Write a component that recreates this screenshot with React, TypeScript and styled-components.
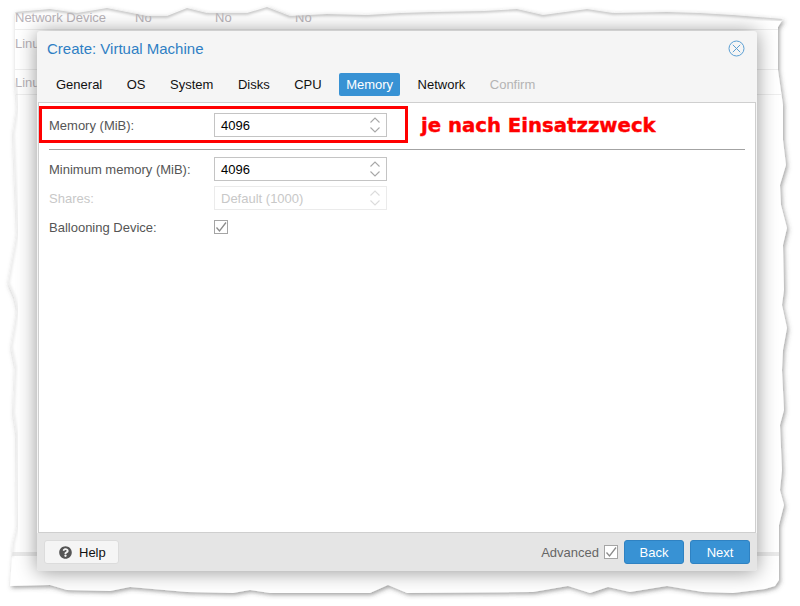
import React from 'react';
import styled, {createGlobalStyle} from 'styled-components';
import {FaQuestionCircle} from 'react-icons/fa';

const topEdge = '15,12 50,9 77,13 107,8 147,16 167,16 187,8 207,13 247,13 267,7 290,16 327,14 367,15 400,13 433,12 483,11 517,9 543,15 587,9 613,13 667,12 700,13 733,15 783,19';
const rightEdge = '778,27 778,70 783,105 783,140 786,165 780,185 781,205 787,228 783,245 784,290 782,305 787,328 783,350 782,370 784,410 780,425 782,470 780,490 784,505 779,525 779,580';
const bottomEdge = '775,586 765,589 733,593 703,592 667,586 630,592 608,587 590,593 568,586 533,592 407,593 388,585 370,593 270,593 250,590 233,593 187,592 130,587 110,591 67,590 50,585 10,586';
const leftEdge = '12,557 13,543 17,527 16,433 13,413 15,367 11,347 17,310 14,297 8,283 17,233 15,187 13,133 17,107 15,83';

const outline = `${topEdge} ${rightEdge} ${bottomEdge} ${leftEdge}`;
const outlineCss = outline
    .split(' ')
    .map((point) => point.split(',').map((n) => `${n}px`).join(' '))
    .join(', ');

const GlobalStyle = createGlobalStyle`
    html, body {
        margin: 0;
        padding: 0;
        background: #fff;
    }
    body {
        font-family: "Liberation Sans", Arial, sans-serif;
        font-size: 13px;
    }
`;

const Stage = styled.div`
    position: relative;
    width: 800px;
    height: 606px;
    overflow: hidden;
`;

const PaperArt = styled.svg`
    position: absolute;
    inset: 0;
`;

// Page behind the dialog, cut off along the torn edge
const Paper = styled.div`
    position: absolute;
    inset: 0;
    display: flex;
    flex-direction: column;
    clip-path: polygon(${outlineCss});
    color: #b8b2b8;
`;

const Row = styled.div<{$height: number}>`
    display: flex;
    box-sizing: border-box;
    height: ${(p) => p.$height}px;
    padding: 0 0 0 15px;
    border-bottom: 1px solid #eee;
`;

const FirstRow = styled(Row)`
    align-items: flex-end;
    padding-bottom: 4px;
`;

const LinuxRow = styled(Row)`
    padding-top: 6px;
`;

const LastRow = styled(Row)`
    padding-top: 5px;
`;

const Cell = styled.span<{$width: number}>`
    width: ${(p) => p.$width}px;
`;

const Band = styled.div`
    height: 4px;
    margin-top: 457px;
    background: #eaeaea;
`;

const Dialog = styled.div`
    position: absolute;
    left: 37px;
    top: 31px;
    width: 720px;
    height: 540px;
    display: flex;
    flex-direction: column;
    box-sizing: border-box;
    background: #f5f5f5;
    border-radius: 3px;
    box-shadow: 0 1px 20px rgba(0, 0, 0, 0.42);
    overflow: hidden;
`;

const Header = styled.div`
    display: flex;
    align-items: center;
    justify-content: space-between;
    height: 35px;
    padding: 0 12px 0 10px;
`;

const Title = styled.div`
    font-size: 15px;
    color: #2f7fc4;
`;

const Tabs = styled.div`
    display: flex;
    height: 36px;
    padding: 7px 0 0 12px;
    box-sizing: border-box;
`;

const Tab = styled.div<{$active?: boolean; $disabled?: boolean}>`
    height: 23px;
    line-height: 24px;
    padding: 0 7px;
    margin-right: 10.5px;
    border-radius: 2px;
    color: ${(p) => (p.$active ? '#fff' : p.$disabled ? '#b4b4b4' : '#111')};
    background: ${(p) => (p.$active ? '#3892d4' : 'transparent')};
`;

const Body = styled.div`
    flex: 1;
    position: relative;
    margin: 0 1px;
    padding: 4px 10px 0 10px;
    background: #fff;
    border: 1px solid #cfcfcf;
    display: flex;
    flex-direction: column;
`;

const Field = styled.div<{$disabled?: boolean}>`
    display: flex;
    align-items: center;
    height: 24px;
    margin-bottom: 5px;
    color: ${(p) => (p.$disabled ? '#c8c8c8' : '#555')};
`;

const TopField = styled(Field)`
    margin-top: 6px;
    margin-bottom: 12px;
`;

const FieldLabel = styled.label`
    width: 165px;
`;

const SpinBox = styled.div<{$disabled?: boolean}>`
    display: flex;
    align-items: center;
    justify-content: space-between;
    box-sizing: border-box;
    width: 173px;
    height: 24px;
    padding: 0 4px 0 6px;
    border: 1px solid ${(p) => (p.$disabled ? '#ebebeb' : '#c4c4c4')};
    color: ${(p) => (p.$disabled ? '#c8c8c8' : '#000')};
    background: #fff;
`;

const Divider = styled.div`
    height: 1px;
    margin-bottom: 7px;
    background: #a3a3a3;
`;

const CheckWrap = styled.span`
    display: inline-flex;
    width: 14px;
    height: 14px;
`;

const Note = styled.div`
    position: absolute;
    left: 382px;
    top: 11px;
    font-family: "DejaVu Sans", Verdana, sans-serif;
    font-size: 19.7px;
    font-weight: 700;
    color: #ff0000;
    -webkit-text-stroke: 0.4px #ff0000;
    white-space: nowrap;
`;

const Highlight = styled.div`
    position: absolute;
    left: 0;
    top: 3px;
    width: 369px;
    height: 37px;
    box-sizing: border-box;
    border: 3px solid #ff0000;
`;

const Footer = styled.div`
    display: flex;
    align-items: center;
    height: 38px;
    padding: 0 7px;
    background: #e5e5e5;
`;

const HelpButton = styled.button`
    display: flex;
    align-items: center;
    gap: 7px;
    box-sizing: border-box;
    width: 75px;
    height: 24px;
    padding: 0 0 0 14px;
    font: inherit;
    color: #111;
    background: #f5f5f5;
    border: 1px solid #dcdcdc;
    border-radius: 3px;
`;

const Advanced = styled.div`
    display: flex;
    align-items: center;
    gap: 5px;
    margin-left: auto;
    color: #666;
`;

const PrimaryButton = styled.button`
    box-sizing: border-box;
    width: 60px;
    height: 24px;
    margin-left: 6px;
    padding: 0;
    font: inherit;
    color: #fff;
    background: #3892d4;
    border: 1px solid #2f82c2;
    border-radius: 3px;
`;

const Spinner = ({color}: {color: string}) => (
    <svg width="14" height="20" viewBox="0 0 14 20" fill="none" stroke={color} strokeWidth="1.1">
        <path d="M2.5 7.5 7 3l4.5 4.5"/>
        <path d="M2.5 12.5 7 17l4.5-4.5"/>
    </svg>
);

const Check = () => (
    <CheckWrap>
        <svg width="14" height="14" viewBox="0 0 14 14" fill="none">
            <rect x="0.5" y="0.5" width="13" height="13" fill="#fff" stroke="#a5a5a5"/>
            <path d="M2.5 7.5 5.5 11 12 2.5" stroke="#8c8c8c" strokeWidth="1.3"/>
        </svg>
    </CheckWrap>
);

const CloseIcon = () => (
    <svg width="17" height="17" viewBox="0 0 17 17" fill="none" stroke="#5b9fd3" strokeWidth="1">
        <circle cx="8.5" cy="8.5" r="7.5"/>
        <path d="M4.8 4.8l7.4 7.4M12.2 4.8l-7.4 7.4"/>
    </svg>
);

export default function App() {
    const tabs = ['General', 'OS', 'System', 'Disks', 'CPU', 'Memory', 'Network', 'Confirm'];

    return (
        <Stage>
            <GlobalStyle/>
            <PaperArt width="800" height="606" viewBox="0 0 800 606">
                <defs>
                    <filter id="tornShadow" x="-5%" y="-5%" width="110%" height="110%">
                        <feDropShadow dx="1.5" dy="2" stdDeviation="2" floodColor="#444" floodOpacity="0.5"/>
                    </filter>
                </defs>
                <polygon points={outline} fill="#fff" filter="url(#tornShadow)"/>
            </PaperArt>
            <Paper>
                <FirstRow $height={30}>
                    <Cell $width={120}>Network Device</Cell>
                    <Cell $width={80}>No</Cell>
                    <Cell $width={80}>No</Cell>
                    <Cell $width={80}>No</Cell>
                </FirstRow>
                <LinuxRow $height={40}>Linux</LinuxRow>
                <LastRow $height={25}>Linux</LastRow>
                <Band/>
            </Paper>
            <PaperArt width="800" height="606" viewBox="0 0 800 606">
                <defs>
                    <clipPath id="paperClip">
                        <polygon points={outline}/>
                    </clipPath>
                    <filter id="edgeBlur">
                        <feGaussianBlur stdDeviation="1.8"/>
                    </filter>
                </defs>
                <g clipPath="url(#paperClip)">
                    <polyline points={topEdge} fill="none" stroke="#bbb" strokeWidth="3" filter="url(#edgeBlur)"/>
                    <polyline points={leftEdge} fill="none" stroke="#ddd" strokeWidth="2" filter="url(#edgeBlur)"/>
                </g>
            </PaperArt>
            <Dialog>
                <Header>
                    <Title>Create: Virtual Machine</Title>
                    <CloseIcon/>
                </Header>
                <Tabs>
                    {tabs.map((tab) => (
                        <Tab key={tab} $active={tab === 'Memory'} $disabled={tab === 'Confirm'}>{tab}</Tab>
                    ))}
                </Tabs>
                <Body>
                    <TopField>
                        <FieldLabel>Memory (MiB):</FieldLabel>
                        <SpinBox>4096<Spinner color="#a8a8a8"/></SpinBox>
                    </TopField>
                    <Divider/>
                    <Field>
                        <FieldLabel>Minimum memory (MiB):</FieldLabel>
                        <SpinBox>4096<Spinner color="#a8a8a8"/></SpinBox>
                    </Field>
                    <Field $disabled>
                        <FieldLabel>Shares:</FieldLabel>
                        <SpinBox $disabled>Default (1000)<Spinner color="#dcdcdc"/></SpinBox>
                    </Field>
                    <Field>
                        <FieldLabel>Ballooning Device:</FieldLabel>
                        <Check/>
                    </Field>
                    <Highlight/>
                    <Note>je nach Einsatzzweck</Note>
                </Body>
                <Footer>
                    <HelpButton><FaQuestionCircle size={13} color="#555"/>Help</HelpButton>
                    <Advanced>Advanced<Check/></Advanced>
                    <PrimaryButton>Back</PrimaryButton>
                    <PrimaryButton>Next</PrimaryButton>
                </Footer>
            </Dialog>
        </Stage>
    );
}
